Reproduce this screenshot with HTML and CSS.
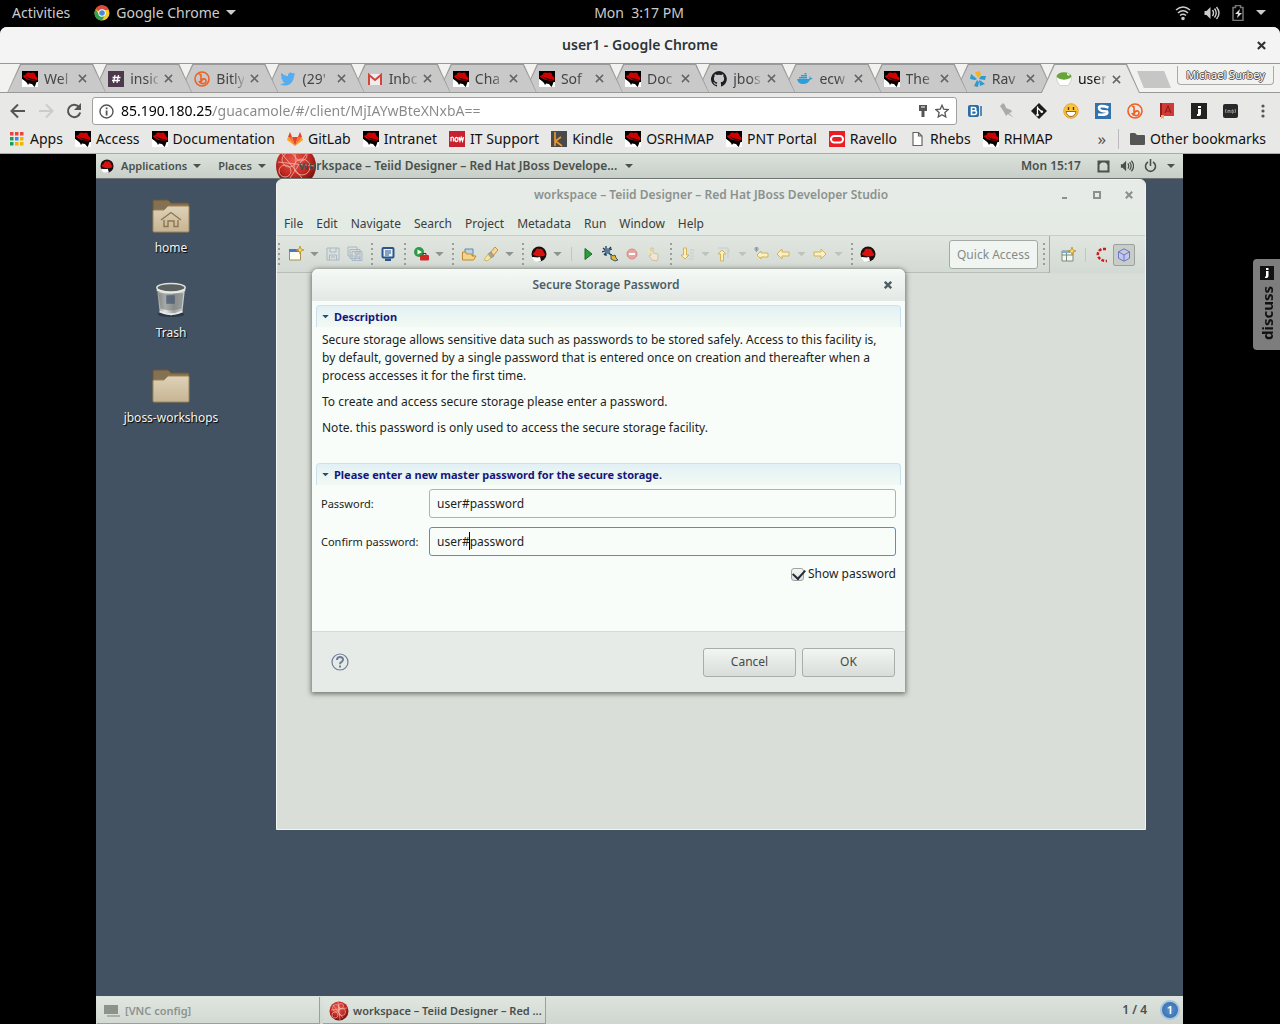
FILE: index.html
```html
<!DOCTYPE html>
<html lang="en">
<head>
<meta charset="utf-8">
<title>user1 - Google Chrome</title>
<link rel="stylesheet" href="styles.css">
</head>
<body>
<svg class="sprite" aria-hidden="true">
  <defs>
    <radialGradient id="ball" cx="45%" cy="35%" r="65%"><stop offset="0" stop-color="#e8584c"/><stop offset=".6" stop-color="#c22a22"/><stop offset="1" stop-color="#6e0f0c"/></radialGradient>
    <linearGradient id="paper" x1="0" y1="0" x2="0" y2="1"><stop offset="0" stop-color="#dfd2b8"/><stop offset="1" stop-color="#c6b593"/></linearGradient>
    <linearGradient id="bin" x1="0" y1="0" x2="1" y2="0"><stop offset="0" stop-color="#8d9290"/><stop offset=".3" stop-color="#e4e7e4"/><stop offset=".6" stop-color="#9ea3a1"/><stop offset="1" stop-color="#d0d4d1"/></linearGradient>
    <symbol id="hat" viewBox="0 0 16 16"><path fill="#000" d="M0 0h16v11l-4 1H5L0 8z"/><path fill="#fff" d="M0 8l5 3.500 7 .5 4-1v5H0z"/><path fill="#d00000" d="M1 5.500Q1 4 3.500 4 4 1 6.500 1.500q2 .8 4.500 0Q13 1.500 13.500 5q2 1 2 2.500 0 2.500-5 2Q5 9.500 1 5.500z"/><path fill="#000" d="M3.800 5q3.700 3.500 9.500 3v1Q6 9.500 3.800 5zM3 9.500l2 2.500 1 2 1-1.500 3 .5 2.500 3 1-2 1-3.500-6 .5z"/></symbol>
    <symbol id="rhround" viewBox="0 0 16 16"><circle cx="8" cy="8" r="7.500" fill="#1a1010"/><path fill="#d9120f" d="M2 8c0-1 1-2 2-2 1-4 3-4 4-3 2-1 4 0 5 4 2 1 1 3-1 3-4 1-9 0-10-2z"/><path fill="#fff" d="M1 11c3 0 5 1 8 0l1 4c-4 2-8 0-9-4z"/></symbol>
    <symbol id="x" viewBox="0 0 10 10"><path d="M1 1l8 8M9 1L1 9" fill="none" stroke="currentColor" stroke-width="1.700"/></symbol>
    <symbol id="car" viewBox="0 0 10 6"><path d="M0 0h10L5 5z" fill="currentColor"/></symbol>
    <symbol id="bitly" viewBox="0 0 16 16"><circle cx="8" cy="8" r="7" fill="none" stroke="#ee6123" stroke-width="1.600"/><path fill="none" stroke="#ee6123" stroke-width="1.600" d="M5 3l2 1v7c1-4 5-4 5-1 0 4-6 3-7 0"/></symbol>
    <symbol id="speaker" viewBox="0 0 16 16"><path fill="currentColor" d="M1 6h2l4-4v12L3 10H1z"/><path d="M9 5q2 3 0 6M11 3.500q3.500 4.500 0 9M13 2q5 6 0 12" fill="none" stroke="currentColor" stroke-width="1.400"/></symbol>
    <symbol id="folder" viewBox="0 0 38 34"><path fill="#847152" stroke="#6b5636" d="M1 15V2q0-1 1-1h14l3 3h17q1 0 1 1v10z"/><path fill="url(#paper)" stroke="#a08455" d="M1 12q0-1 1-1h10l4-4h20q1 0 1 1v24q0 1-1 1H2q-1 0-1-1z"/></symbol>
    <symbol id="redball" viewBox="0 0 20 20"><circle cx="10" cy="10" r="9.500" fill="url(#ball)"/><g fill="none" stroke="#f6c0b6" stroke-width=".6"><circle cx="7" cy="7" r="3.500"/><circle cx="13" cy="11" r="3.500"/><circle cx="12" cy="5" r="2.500"/><circle cx="6" cy="14" r="3"/><path d="M2 9l16-2M4 4l10 13M9 1l2 18"/></g></symbol>
    <symbol id="arrowl" viewBox="0 0 16 16"><path d="M2 8l5-5v3h7v4H7v3z" fill="#faf0c4" stroke="#d5b258"/></symbol>
  </defs>
</svg>

<header class="shell">
  <div class="shell-side">
    <a href="#">Activities</a>
    <a href="#" class="app-menu">
      <svg width="16" height="16" viewBox="0 0 16 16"><circle cx="8" cy="8" r="7.500" fill="#f6c927"/><path fill="#dd4b3e" d="M8 8L1.500 4.200A7.500 7.500 0 0 1 15 5H8z"/><path fill="#2da44e" d="M1.500 4.200A7.500 7.500 0 0 0 8 15.500L11 10 5 9.500z"/><circle cx="8" cy="8" r="3.700" fill="#fff"/><circle cx="8" cy="8" r="2.800" fill="#4a86e0"/></svg>
      Google Chrome
      <svg width="10" height="6"><use href="#car"/></svg>
    </a>
  </div>
  <time>Mon&nbsp; 3:17 PM</time>
  <div class="shell-side tray">
    <svg width="16" height="16" viewBox="0 0 16 16" fill="none" stroke="#ccc" stroke-width="1.600"><path d="M1 5q7-6 14 0M3 8q5-4.500 10 0M5 10.500q3-2.500 6 0"/><circle cx="8" cy="13.500" r="1" fill="#ccc"/></svg>
    <svg width="17" height="16"><use href="#speaker"/></svg>
    <svg width="12" height="16" viewBox="0 0 12 16"><path d="M1 2.500h2.500v-2h5v2H11v13H1z" fill="none" stroke="#777" stroke-width="1.500"/><path d="M8 4L3 9h3l-1 4 5-5H7z" fill="#ddd"/></svg>
    <svg width="10" height="6"><use href="#car"/></svg>
  </div>
</header>

<div class="browser">
  <div class="titlebar"><h1>user1 - Google Chrome</h1><button class="plain" aria-label="Close window"><svg width="9" height="9" viewBox="0 0 10 10"><path d="M1 1l8 8M9 1L1 9" stroke="currentColor" stroke-width="2.400"/></svg></button></div>

  <div class="strip">
    <nav class="tabs" aria-label="Tabs">
      <div class="tab"><div class="tab-in"><svg class="fav"><use href="#hat"/></svg><span>Wel</span><button class="plain" aria-label="Close tab"><svg width="9" height="9"><use href="#x"/></svg></button></div></div>
      <div class="tab"><div class="tab-in"><svg class="fav" viewBox="0 0 16 16"><path fill="#4d394b" d="M0 0h16v16H0z"/><path d="M7 4L5.500 12M10.500 4L9 12M4.500 6.500h8M4 9.500h8" stroke="#fff" stroke-width="1.300"/></svg><span>insic</span><button class="plain" aria-label="Close tab"><svg width="9" height="9"><use href="#x"/></svg></button></div></div>
      <div class="tab"><div class="tab-in"><svg class="fav"><use href="#bitly"/></svg><span>Bitly</span><button class="plain" aria-label="Close tab"><svg width="9" height="9"><use href="#x"/></svg></button></div></div>
      <div class="tab"><div class="tab-in"><svg class="fav" viewBox="0 0 16 16"><path fill="#55acee" d="M0 13q3 0 5-1.500-2-.2-3-2h1.400Q1 8.500 1 6l1.300.4Q0 4 1.500 2 4 5 8 5.300 7.500 2 10.500 1.500q1.500 0 2.500 1l2-.8-1.300 1.900 1.800-.5L14 4.800Q14 10 10 13q-5 3-10 0z"/></svg><span>(29'</span><button class="plain" aria-label="Close tab"><svg width="9" height="9"><use href="#x"/></svg></button></div></div>
      <div class="tab"><div class="tab-in"><svg class="fav" viewBox="0 0 16 16"><path fill="#eee" d="M1 3h14v11H1z"/><path fill="none" stroke="#d5433a" stroke-width="2" d="M2 14V4l6 5 6-5v10"/></svg><span>Inbc</span><button class="plain" aria-label="Close tab"><svg width="9" height="9"><use href="#x"/></svg></button></div></div>
      <div class="tab"><div class="tab-in"><svg class="fav"><use href="#hat"/></svg><span>Cha</span><button class="plain" aria-label="Close tab"><svg width="9" height="9"><use href="#x"/></svg></button></div></div>
      <div class="tab"><div class="tab-in"><svg class="fav"><use href="#hat"/></svg><span>Sof</span><button class="plain" aria-label="Close tab"><svg width="9" height="9"><use href="#x"/></svg></button></div></div>
      <div class="tab"><div class="tab-in"><svg class="fav"><use href="#hat"/></svg><span>Doc</span><button class="plain" aria-label="Close tab"><svg width="9" height="9"><use href="#x"/></svg></button></div></div>
      <div class="tab"><div class="tab-in"><svg class="fav" viewBox="0 0 16 16"><path fill="#1b1f23" d="M8 0a8 8 0 0 0-2.500 15.600c.4.100.5-.2.500-.4v-1.500c-2.200.5-2.700-1-2.700-1-.4-.9-.9-1.200-.9-1.200-.7-.5.100-.5.100-.5.800.1 1.200.8 1.200.8.700 1.300 1.900.9 2.300.7.100-.5.300-.9.500-1.100C4.700 11.200 2.900 10.500 2.900 7.500c0-.9.300-1.600.8-2.200-.1-.2-.4-1 .1-2.100 0 0 .7-.2 2.200.8a7.600 7.600 0 0 1 4 0c1.500-1 2.200-.8 2.200-.8.400 1.100.2 1.900.1 2.100.5.600.8 1.300.8 2.200 0 3-1.800 3.700-3.600 3.900.3.200.5.700.5 1.500v2.200c0 .2.100.5.600.4A8 8 0 0 0 8 0z"/></svg><span>jbos</span><button class="plain" aria-label="Close tab"><svg width="9" height="9"><use href="#x"/></svg></button></div></div>
      <div class="tab"><div class="tab-in"><svg class="fav" viewBox="0 0 16 16"><path fill="#2b9fd8" d="M0 8h12q1-1 .500-3 1 .5 1.300 2 1-.3 2 .2-1 1.300-2.600 1.300Q11 13 6 13 1 13 0 8zM2 6h8v1.500H2zM4 4h6v1.500H4zM7.500 2h2v1.500h-2z"/></svg><span>ecw</span><button class="plain" aria-label="Close tab"><svg width="9" height="9"><use href="#x"/></svg></button></div></div>
      <div class="tab"><div class="tab-in"><svg class="fav"><use href="#hat"/></svg><span>The</span><button class="plain" aria-label="Close tab"><svg width="9" height="9"><use href="#x"/></svg></button></div></div>
      <div class="tab"><div class="tab-in"><svg class="fav" viewBox="0 0 16 16"><path fill="#2a9bd0" d="M7 8L1 3l-1 5 5 1zM7 9l-3 6 4 1 1-5zM9 9l1 6 5-2-4-3zM9 8l6 1 1-4-5 0z"/><path fill="#f5b324" d="M8 7L5 1l5-1 1 4z"/></svg><span>Rav</span><button class="plain" aria-label="Close tab"><svg width="9" height="9"><use href="#x"/></svg></button></div></div>
      <div class="tab active"><div class="tab-in"><svg class="fav" viewBox="0 0 16 16"><path fill="#fff" stroke="#bbb" stroke-width=".6" d="M.5 5h15q0 7-4 9.500h-7Q.5 12 .5 5z"/><ellipse cx="8" cy="5" rx="7.300" ry="3.700" fill="#67a53c"/><path fill="#e7eed0" d="M11 2l3 1-1 2-2-1z"/></svg><span>user</span><button class="plain" aria-label="Close tab"><svg width="9" height="9"><use href="#x"/></svg></button></div></div>
    </nav>
    <button class="newtab" aria-label="New tab"></button>
    <button class="profile">Michael Surbey</button>
  </div>

  <div class="toolbar">
    <button class="plain" aria-label="Back"><svg width="16" height="16" viewBox="0 0 16 16" fill="none" stroke="#555" stroke-width="2"><path d="M15 8H2M8 1.500L1.500 8 8 14.500"/></svg></button>
    <button class="plain" aria-label="Forward"><svg width="16" height="16" viewBox="0 0 16 16" fill="none" stroke="#ccc" stroke-width="2"><path d="M1 8h13M8 1.500L14.500 8 8 14.500"/></svg></button>
    <button class="plain" aria-label="Reload"><svg width="16" height="16" viewBox="0 0 16 16"><path d="M13 4a6.200 6.200 0 1 0 1.200 5.500" fill="none" stroke="#555" stroke-width="2"/><path fill="#555" d="M15 0v7H8z"/></svg></button>
    <div class="omnibox">
      <svg width="15" height="15" viewBox="0 0 15 15"><circle cx="7.500" cy="7.500" r="6.500" fill="none" stroke="#555" stroke-width="1.400"/><path fill="#555" d="M6.700 3.500h1.800v1.700H6.700zM6.700 6.500h1.800v5H6.700z"/></svg>
      <input class="url" type="text" aria-label="Address" value="85.190.180.25/guacamole/#/client/MjIAYwBteXNxbA==">
      <svg width="10" height="14" viewBox="0 0 10 14"><path fill="#555" d="M1 1h8v6H6.500v6h-3V7H1z"/><path fill="#fff" d="M3 2.500h4v1H3z"/></svg>
      <svg width="14" height="14" viewBox="0 0 16 16"><path d="M8 1.500l2 4.500 5 .5-3.700 3.300 1 5L8 12.200l-4.300 2.600 1-5L1 6.500 6 6z" fill="none" stroke="#555" stroke-width="1.500"/></svg>
    </div>
    <div class="ext">
      <svg viewBox="0 0 16 16"><rect x="1" y="2" width="11" height="12" rx="2" fill="#2a6ca5"/><path fill="none" stroke="#fff" stroke-width="1.600" d="M4.500 4.500v7h3q2 0 2-2t-2-1.700h-3 2.600q1.700 0 1.700-1.700T7 4.500z"/><path stroke="#2a6ca5" stroke-width="1.500" d="M14 3v10"/></svg>
      <svg viewBox="0 0 16 16"><path fill="#aaa" d="M1 3l3-3 2 2 1 3 5 2 1 2-3 1 5 5-6-4-2 2-2-4-2-3z"/></svg>
      <svg viewBox="0 0 16 16"><path fill="#1c1c1c" d="M8 0l8 8-8 8-8-8z"/><path stroke="#fff" stroke-width="1.300" d="M6.500 3.500v9M6.500 5L11 9"/><circle cx="6.500" cy="12" r="1.300" fill="#fff"/><circle cx="10.800" cy="8.700" r="1.300" fill="#fff"/></svg>
      <svg viewBox="0 0 16 16"><circle cx="8" cy="8" r="7.300" fill="#fbc53a" stroke="#e9962b" stroke-width=".8"/><path fill="#fff" stroke="#7c4a10" stroke-width=".8" d="M3 8.500h10q-1 5-5 5t-5-5z"/><path stroke="#5d3508" stroke-width="1.400" d="M5.500 4v3M10.500 4v3"/></svg>
      <svg viewBox="0 0 16 16"><path fill="#3273ad" d="M0 0h16v16H0z"/><path fill="none" stroke="#fff" stroke-width="2.600" d="M13.500 4.500Q4 1.500 4 5t8 3.500q2 4-9 3"/></svg>
      <svg><use href="#bitly"/></svg>
      <svg viewBox="0 0 16 16"><path fill="#d33a35" d="M1 0h14v13H1z"/><path fill="#8e1e1c" d="M1 0h2v14H1z"/><path fill="#eee" d="M2 13h13v2H2z"/><path fill="#f3b93a" d="M2 12h3v4l-1.500-1L2 16z"/><path fill="none" stroke="#8e1e1c" stroke-width="1.200" d="M6 10l3-7 3 7M7 8h4"/></svg>
      <svg viewBox="0 0 16 16"><path fill="#222" d="M0 0h16v16H0z"/><path fill="#fff" d="M7 3h3v2H7zM7 6h3v5q0 2-2 2H6v-2h1z"/></svg>
      <svg viewBox="0 0 16 16"><rect y="1" width="15" height="14" rx="2" fill="#26282a"/><path fill="none" stroke="#999" d="M3 6q-1 2 0 4M5 10V7l1 1 1-1v3M9 7v3h1q1-1.500 0-3zM12 6q1 2 0 4"/></svg>
    </div>
    <button class="plain" aria-label="Menu"><svg width="4" height="14" viewBox="0 0 4 14" fill="#555"><circle cx="2" cy="2" r="1.600"/><circle cx="2" cy="7" r="1.600"/><circle cx="2" cy="12" r="1.600"/></svg></button>
  </div>

  <nav class="bookmarks" aria-label="Bookmarks">
    <a href="#" class="apps"><svg class="fav" viewBox="0 0 16 16"><g fill="#e8453c"><path d="M1 1h3.500v3.500H1zM6 1h3.500v3.500H6zM11 1h3.500v3.500H11z"/></g><path fill="#1b9e5a" d="M1 6h3.500v3.500H1zM1 11h3.500v3.500H1z"/><path fill="#3b86f0" d="M6 6h3.500v3.500H6z"/><path fill="#f4b400" d="M11 6h3.500v3.500H11zM6 11h3.500v3.500H6zM11 11h3.500v3.500H11z"/></svg>Apps</a>
    <a href="#"><svg class="fav"><use href="#hat"/></svg>Access</a>
    <a href="#"><svg class="fav"><use href="#hat"/></svg>Documentation</a>
    <a href="#"><svg class="fav" viewBox="0 0 16 16"><path fill="#e24329" d="M8 15L5 6h6z"/><path fill="#fc6d26" d="M8 15L1 6h4zM8 15l7-9h-4z"/><path fill="#fca326" d="M1 6L0 9l8 6zM15 6l1 3-8 6z"/><path fill="#e24329" d="M1 6l2-5 2 5zM15 6l-2-5-2 5z"/></svg>GitLab</a>
    <a href="#"><svg class="fav"><use href="#hat"/></svg>Intranet</a>
    <a href="#"><svg class="fav" viewBox="0 0 16 16"><path fill="#c8202c" d="M0 0h16v16H0z"/><path fill="none" stroke="#fff" stroke-width="1.300" d="M2 10.500V6.500q2.500-1 2.500 1v3M6 8.500q0-2 1.500-2T9 8.500t-1.500 2T6 8.500zM10 6l1 4 1.200-3.500L13.500 10l1-4"/></svg>IT Support</a>
    <a href="#"><svg class="fav" viewBox="0 0 16 16"><path fill="#4a4a4a" d="M0 0h16v16H0z"/><path fill="none" stroke="#f0982d" stroke-width="1.600" d="M4 1v14M10 6l-5.500 4L11 15"/></svg>Kindle</a>
    <a href="#"><svg class="fav"><use href="#hat"/></svg>OSRHMAP</a>
    <a href="#"><svg class="fav"><use href="#hat"/></svg>PNT Portal</a>
    <a href="#"><svg class="fav" viewBox="0 0 16 16"><path fill="#ec1c24" d="M0 0h16v16H0z"/><rect x="2" y="5" width="12" height="6.500" rx="3.200" fill="none" stroke="#fff" stroke-width="2"/></svg>Ravello</a>
    <a href="#"><svg class="fav" viewBox="0 0 16 16"><path fill="#fff" stroke="#666" stroke-width="1.200" d="M4 1.500h5.500L13 5v9.500H4zM9.500 1.500V5H13"/></svg>Rhebs</a>
    <a href="#"><svg class="fav"><use href="#hat"/></svg>RHMAP</a>
    <button class="plain more" aria-label="More bookmarks">»</button>
    <a href="#" class="other"><svg width="15" height="12" viewBox="0 0 15 12"><path fill="#555" d="M0 1q0-1 1-1h4l2 2h7q1 0 1 1v8q0 1-1 1H1q-1 0-1-1z"/></svg>Other bookmarks</a>
  </nav>
</div>

<main class="remote">
  <div class="desktop">
    <div class="panel">
      <button class="plain panel-item"><svg class="menu-logo" width="14" height="14"><use href="#rhround"/></svg>Applications<svg width="8" height="5"><use href="#car"/></svg></button>
      <button class="plain panel-item">Places<svg width="8" height="5"><use href="#car"/></svg></button>
      <button class="plain panel-item task"><svg class="task-ball" viewBox="0 0 40 24" width="40" height="24"><circle cx="20" cy="12" r="20" fill="url(#ball)"/><g fill="none" stroke="#f3b4aa" stroke-width=".8"><circle cx="13" cy="6" r="7"/><circle cx="26" cy="13" r="8"/><circle cx="9" cy="17" r="6"/><circle cx="25" cy="1" r="6"/><path d="M2 8l36 4M6 0l20 24M30 0L14 24"/></g></svg><span>workspace – Teiid Designer – Red Hat JBoss Develope...</span><svg width="8" height="5"><use href="#car"/></svg></button>
      <div class="panel-tray">
        <time>Mon 15:17</time>
        <svg width="13" height="13" viewBox="0 0 13 13"><path fill="none" stroke="currentColor" stroke-width="2" d="M1.500 1.500h10v10h-10z"/><path fill="currentColor" d="M2 2h3L2 5zM11 2v3L8 2z"/></svg>
        <svg width="14" height="14"><use href="#speaker"/></svg>
        <svg width="13" height="14" viewBox="0 0 13 14"><path d="M4 3a5 5 0 1 0 5 0M6.500 0v7" fill="none" stroke="currentColor" stroke-width="1.600"/></svg>
        <svg width="8" height="5"><use href="#car"/></svg>
      </div>
    </div>

    <div class="surface">
      <div class="shortcuts">
        <a href="#"><svg width="38" height="34" viewBox="0 0 38 34"><use href="#folder"/><path d="M9 21l10-7.500L29 21M12 21v6.500h4V22h6v5.500h4V21" fill="none" stroke="#8e7650" stroke-width="1.400"/></svg>home</a>
        <a href="#"><svg width="36" height="36" viewBox="0 0 38 38"><ellipse cx="19" cy="34" rx="14" ry="3" fill="#2a3746"/><path fill="url(#bin)" d="M4 5h30l-3 27q-12 6-24 0z"/><path fill="#727876" opacity=".55" d="M6 12h26l-2 16q-11 4-22 0z"/><path fill="#4c5d77" opacity=".8" d="M14 14h9v9h-9z"/><ellipse cx="19" cy="6" rx="15" ry="4.500" fill="#5a615f" stroke="#dfe2df" stroke-width="1.500"/><path fill="none" stroke="#e6e9e6" stroke-width="2" d="M4 8q15 7 30 0M7 31q12 6 24 0"/></svg>Trash</a>
        <a href="#"><svg width="38" height="34"><use href="#folder"/></svg>jboss-workshops</a>
      </div>

      <section class="studio" aria-label="Developer Studio">
        <div class="studio-title">
          <h2>workspace – Teiid Designer – Red Hat JBoss Developer Studio</h2>
          <button class="plain" aria-label="Minimize"><svg width="8" height="8" viewBox="0 0 8 8"><path fill="currentColor" d="M1 6h5v2H1z"/></svg></button>
          <button class="plain" aria-label="Maximize"><svg width="8" height="8" viewBox="0 0 8 8"><path fill="none" stroke="currentColor" stroke-width="2" d="M1 1h6v6H1z"/></svg></button>
          <button class="plain" aria-label="Close"><svg width="8" height="8" viewBox="0 0 10 10"><path d="M1 1l8 8M9 1L1 9" stroke="currentColor" stroke-width="2.600"/></svg></button>
        </div>
        <div class="menubar">
          <button class="plain">File</button><button class="plain">Edit</button><button class="plain">Navigate</button><button class="plain">Search</button><button class="plain">Project</button><button class="plain">Metadata</button><button class="plain">Run</button><button class="plain">Window</button><button class="plain">Help</button>
        </div>
        <div class="tools">
          <div class="tool-row">
            <i class="grip"></i>
            <svg class="tool" viewBox="0 0 16 16"><path fill="#fdfdf4" stroke="#a98f4a" d="M1.500 4h11v10h-11z"/><path fill="#3f7cc4" d="M1 3h10v3H1z"/><path fill="#f7dc6a" stroke="#b48a1e" stroke-width=".7" d="M12 0l1 3 3 1-3 1-1 3-1-3-3-1 3-1z"/></svg>
            <svg class="drop"><use href="#car"/></svg>
            <svg class="tool" viewBox="0 0 16 16" fill="none" stroke="#a9b7c6"><path d="M2 2h12v12H2zM5 2v4h6V2M4.500 14V9h7v5M6 11h4"/></svg>
            <svg class="tool" viewBox="0 0 16 16" fill="none" stroke="#a9b7c6"><path d="M1 1h9v9H1zM3 3.500h10v9H3zM5 5.500h10v9H5zM8 14.500V11h5v3.500M8 5.500V8h4V5.500"/></svg>
            <i class="grip"></i>
            <svg class="tool" viewBox="0 0 16 16"><rect x="2.500" y="2" width="11" height="9.500" rx="1" fill="#e7f0f5" stroke="#2b5590" stroke-width="2"/><path stroke="#2b5590" d="M5 5h6M5 7h6M5 9h4"/><path fill="#2b5590" d="M5 12.500h6V15H5z"/></svg>
            <i class="grip"></i>
            <svg class="tool" viewBox="0 0 16 16"><circle cx="6" cy="6" r="5" fill="#2f9b45"/><path fill="#fff" d="M4.500 3.500L9 6 4.500 8.500z"/><rect x="7" y="9" width="9" height="5.500" rx="1" fill="#cf2a27"/><path fill="none" stroke="#7d1514" d="M10 9V7.500h3V9"/></svg>
            <svg class="drop"><use href="#car"/></svg>
            <i class="grip"></i>
            <svg class="tool" viewBox="0 0 16 16"><path fill="#bcd3e6" stroke="#6486a8" d="M4 3h8v7H4z"/><path fill="#f4d58a" stroke="#c08a2c" d="M1.500 14V6h3l1 2H11v2h4l-2.500 4z"/></svg>
            <svg class="tool" viewBox="0 0 16 16"><path fill="#f4d79c" stroke="#c6923c" d="M7 7l5-6 3 3-5 6z"/><path fill="#a9a6a0" stroke="#777" stroke-width=".6" d="M5 8l3-2 3 4-3 2z"/><path fill="#f4e7a5" stroke="#c6a63c" stroke-width=".7" d="M1 14l4-6 3 4-4 3z"/></svg>
            <svg class="drop"><use href="#car"/></svg>
            <i class="grip"></i>
            <svg class="tool"><use href="#rhround"/></svg>
            <svg class="drop"><use href="#car"/></svg>
            <i class="sep"></i>
            <svg class="tool" viewBox="0 0 16 16"><path fill="#2c9d38" stroke="#1a6a25" d="M5 2.500L12 8l-7 5.500z"/></svg>
            <svg class="tool" viewBox="0 0 16 16"><path stroke="#24384c" stroke-width="1.300" d="M1 2l8 7M4 0v10M9 1L2 9M0 6l10-3"/><circle cx="5.500" cy="5" r="2.800" fill="#4c7ba4"/><path fill="#e2b93a" stroke="#24384c" stroke-width=".8" d="M9 8l2 2 2-1 1 3 2 2-3 1-2-1-2-1z"/></svg>
            <svg class="tool" viewBox="0 0 16 16"><circle cx="8" cy="8" r="5" fill="#e5a5a0" stroke="#d88"/><path fill="#fff" d="M5 7h6v2H5z"/></svg>
            <svg class="tool" viewBox="0 0 16 16"><path fill="#eee6d2" stroke="#cfbf9c" d="M6 14l-3-4 2-1V2h2v5l5 1v4l-1 3z"/><path fill="#f7e4a0" d="M1 3l8 5-8-2z"/></svg>
            <i class="grip"></i>
            <svg class="tool" viewBox="0 0 16 16"><path stroke="#c2ccd2" d="M11 4h4M11 7h4M11 10h4M10 13h5"/><path d="M6 13l-4-4h2.500V2h3v7H10z" fill="#faf0c4" stroke="#d5b258"/></svg>
            <svg class="drop pale"><use href="#car"/></svg>
            <svg class="tool" viewBox="0 0 16 16"><path stroke="#c2ccd2" d="M2 2h10M11 5h3M12 2v10"/><path d="M6 4l4 4H7.500v7h-3V8H2z" fill="#faf0c4" stroke="#d5b258"/></svg>
            <svg class="drop pale"><use href="#car"/></svg>
            <svg class="tool" viewBox="0 0 16 16"><path d="M4 9l4-4v2h7v4H8v2z" fill="#faf0c4" stroke="#d5b258"/><path stroke="#7a8a98" d="M1 3h5M3.500 1v5M2 1l3 4M5 1L2 5" stroke-width=".7"/></svg>
            <svg class="tool"><use href="#arrowl"/></svg>
            <svg class="drop pale"><use href="#car"/></svg>
            <svg class="tool flip"><use href="#arrowl"/></svg>
            <svg class="drop pale"><use href="#car"/></svg>
            <i class="grip"></i>
            <svg class="tool"><use href="#rhround"/></svg>
            <input class="quick" type="text" placeholder="Quick Access" aria-label="Quick Access">
            <i class="grip"></i>
          </div>
          <div class="perspectives">
            <svg class="tool" viewBox="0 0 16 16"><path fill="#f4f7ee" stroke="#7d8b80" d="M2 4h11v10H2zM2 8h11M6.500 4v10"/><path fill="#7eb0cc" d="M2 4h8v2H2z"/><path fill="#f7dc6a" stroke="#b48a1e" stroke-width=".7" d="M12 0l1 3 3 1-3 1-1 3-1-3-3-1 3-1z"/></svg>
            <i class="sep"></i>
            <svg class="tool" viewBox="0 0 16 16"><path fill="none" stroke="#c81e1e" stroke-width="2.500" stroke-dasharray="3 1.500" d="M12 2H8Q3 4 4 9q2 5 9 5"/></svg>
            <button class="pressed" aria-label="Teiid Designer"><svg width="14" height="14" viewBox="0 0 14 14"><path fill="#c3c8ee" stroke="#6d76c4" d="M7 .8l5.500 3v6.500L7 13.200 1.500 10.300V3.800zM1.500 3.800L7 7l5.500-3.200M7 7v6"/></svg></button>
          </div>
        </div>
      </section>

      <section class="dialog" role="dialog" aria-labelledby="dlg">
        <div class="dialog-title"><h2 id="dlg">Secure Storage Password</h2><button class="plain" aria-label="Close dialog"><svg width="8" height="8" viewBox="0 0 10 10"><path d="M1 1l8 8M9 1L1 9" stroke="currentColor" stroke-width="3"/></svg></button></div>
        <form class="dialog-body">
          <h3><button type="button" class="plain expander"><svg width="7" height="4" viewBox="0 0 10 6"><use href="#car"/></svg>Description</button></h3>
          <div class="prose">
            <p>Secure storage allows sensitive data such as passwords to be stored safely. Access to this facility is,<br>by default, governed by a single password that is entered once on creation and thereafter when a<br>process accesses it for the first time.</p>
            <p>To create and access secure storage please enter a password.</p>
            <p>Note. this password is only used to access the secure storage facility.</p>
          </div>
          <h3><button type="button" class="plain expander"><svg width="7" height="4" viewBox="0 0 10 6"><use href="#car"/></svg>Please enter a new master password for the secure storage.</button></h3>
          <div class="fields">
            <label for="pw">Password:</label><div class="field"><input id="pw" type="text" value="user#password"></div>
            <label for="pw2">Confirm password:</label><div class="field current"><input id="pw2" type="text" value="user#password"><i class="cursor"></i></div>
          </div>
          <label class="show"><input type="checkbox" checked>Show password</label>
        </form>
        <div class="dialog-foot">
          <button class="plain help" aria-label="Help"><svg width="18" height="18" viewBox="0 0 18 18" fill="none" stroke="#6d7d96"><circle cx="9" cy="9" r="8" stroke-width="1.200"/><path stroke-width="2" d="M6 7q0-3 3-3t3 2.500Q12 8 10.500 9 9 9.500 9 11.300"/><path fill="#6d7d96" stroke="none" d="M8 12.500h2v2H8z"/></svg></button>
          <button class="push">Cancel</button>
          <button class="push">OK</button>
        </div>
      </section>
    </div>

    <div class="panel bottom">
      <button class="window-btn idle"><svg width="18" height="14" viewBox="0 0 18 14"><path fill="#8d928d" d="M1 1h14v9H1z"/><path fill="#aab0aa" d="M4 11h13v2H4z"/></svg>[VNC config]</button>
      <button class="window-btn"><svg width="20" height="20"><use href="#redball"/></svg>workspace – Teiid Designer – Red ...</button>
      <span class="pager">1 / 4</span>
      <button class="notify">1</button>
    </div>
  </div>
  <button class="discuss"><svg width="14" height="14" viewBox="0 0 14 14"><path fill="#111" d="M0 0h14v14H0z"/><path fill="#fff" d="M6 2h2.500v2H6zM6 5h2.500v5q0 2-2 2H5v-1.500h1z"/></svg><span>discuss</span></button>
</main>
</body>
</html>
```
FILE: styles.css
```css
* { box-sizing: border-box; }
body { margin: 0; min-height: 100vh; display: flex; flex-direction: column; background: #000; font: 14px/20px "Noto Sans", "Open Sans", sans-serif; color: #222; }
h1, h2, h3, p { margin: 0; font-size: inherit; }
a { color: inherit; text-decoration: none; }
svg { flex: none; display: block; }
button, input { font: inherit; color: inherit; }
.sprite { position: absolute; width: 0; height: 0; }
.plain { background: none; border: 0; padding: 0; }
.fav { width: 16px; height: 16px; }

.shell { display: flex; align-items: center; height: 27px; padding: 0 14px 2px 12px; color: #ccc; }
.shell-side { flex: 1; display: flex; gap: 24px; align-items: center; }
.app-menu { display: flex; gap: 6px; align-items: center; }
.shell-side.tray { justify-content: flex-end; gap: 12px; }

.browser { background: #e8e8e7; border-radius: 7px 7px 0 0; border-bottom: 1px solid #aaa; }
.titlebar { display: flex; align-items: center; height: 36px; padding: 0 14px 0 23px; background: #f4f4f4; border-radius: 7px 7px 0 0; color: #2e3436; }
.titlebar h1 { flex: 1; text-align: center; font-weight: 600; }
.strip { display: flex; height: 30px; border-top: 1px solid #999; padding-left: 7px; background: linear-gradient(#999, #999) bottom / 100% 1px no-repeat #f2f2f0; }
.tabs { flex: 1; min-width: 0; display: flex; padding-left: 13px; }
.tab { flex: 1 1 0; min-width: 0; margin-left: -13px; padding: 1px 0; background: #999; clip-path: polygon(13px 0, calc(100% - 13px) 0, 100% 100%, 0 100%); }
.tab-in { height: 100%; margin: 0 1px; padding: 0 18px 0 14px; display: flex; align-items: center; gap: 6px; background: #c9c9c9; clip-path: polygon(13px 0, calc(100% - 13px) 0, 100% 100%, 0 100%); color: #444; }
.tab span { flex: 1; min-width: 0; white-space: nowrap; mask-image: linear-gradient(90deg, #000 60%, #0003); }
.tab button { color: #666; }
.tab:nth-child(1) { z-index: 12; }
.tab:nth-child(2) { z-index: 11; }
.tab:nth-child(3) { z-index: 10; }
.tab:nth-child(4) { z-index: 9; }
.tab:nth-child(5) { z-index: 8; }
.tab:nth-child(6) { z-index: 7; }
.tab:nth-child(7) { z-index: 6; }
.tab:nth-child(8) { z-index: 5; }
.tab:nth-child(9) { z-index: 4; }
.tab:nth-child(10) { z-index: 3; }
.tab:nth-child(11) { z-index: 2; }
.tab:nth-child(12) { z-index: 1; }
.tab.active { z-index: 20; padding-bottom: 0; }
.active .tab-in { background: #e8e8e7; color: #111; }
.newtab { flex: none; width: 34px; height: 17px; margin: 7px 6px 0 -3px; padding: 0; border: 0; background: #c6c6c6; clip-path: polygon(0 0, 80% 0, 100% 100%, 20% 100%); }
.profile { flex: none; width: 97px; height: 19px; margin: 2px 6px 0 0; padding: 0; border: 1px solid #aaa; border-top: 0; border-radius: 0 0 4px 4px; background: #f2f2f0; color: #fff; font-size: 11px; line-height: 16px; text-shadow: 1px 0 #555, -1px 0 #555, 0 1px #555, 0 -1px #555; white-space: nowrap; }

.toolbar { display: flex; align-items: center; gap: 12px; height: 36px; padding: 0 15px 0 10px; }
.omnibox { flex: 1; display: flex; align-items: center; gap: 7px; height: 28px; margin-left: -2px; padding: 0 7px 0 6px; border: 1px solid #a0a0a0; border-radius: 3px; background: #fff; }
.url { flex: 1; min-width: 0; border: 0; outline: 0; padding: 0; color: transparent; background: linear-gradient(90deg, #000 92px, #888 92px); background-clip: text; -webkit-background-clip: text; }
.ext { display: flex; gap: 16px; margin: 0 10px 0 -2px; }
.ext svg { width: 16px; height: 16px; }

.bookmarks { display: flex; align-items: center; gap: 12px; height: 24px; padding: 0 14px 4px 9px; color: #111; white-space: nowrap; }
.bookmarks a { display: flex; align-items: center; gap: 5px; }
.bookmarks .more { margin-left: auto; font-size: 17px; color: #555; }
.bookmarks .other { border-left: 1px solid #bbb; padding-left: 11px; }

.remote { flex: 1; display: flex; position: relative; padding: 0 97px 0 96px; font-size: 12px; line-height: 18px; }
.desktop { flex: 1; min-width: 0; display: flex; flex-direction: column; background: #425262; }
.panel { display: flex; align-items: center; height: 25px; padding: 0 8px 0 4px; border-bottom: 1px solid #6d746f; background: linear-gradient(#dbe2db, #c8cec8); font-size: 11px; font-weight: 600; color: #4a504c; white-space: nowrap; }
.panel-item { display: flex; align-items: center; gap: 6px; margin-right: 17px; }
.menu-logo { margin-right: 1px; }
.task { margin-left: -7px; gap: 8px; font-size: 12px; }
.task-ball { margin-right: -25px; }
.task span { z-index: 1; }
.panel-tray { margin-left: auto; display: flex; align-items: center; gap: 10px; font-size: 12px; }
.panel-tray time { margin-right: 6px; }

.surface { flex: 1; position: relative; }
.shortcuts { width: 150px; padding-top: 16px; display: flex; flex-direction: column; gap: 23px; }
.shortcuts a { display: flex; flex-direction: column; align-items: center; justify-content: flex-end; gap: 6px; height: 62px; color: #f2f4f2; text-shadow: 1px 1px 1px #000; }

.studio { position: absolute; left: 180px; right: 37px; top: 0; height: 651px; border: 1px solid #f1f5f1; border-radius: 6px 6px 0 0; background: #d9dfd8; }
.studio-title { display: flex; align-items: center; gap: 24px; height: 30px; padding: 0 12px 0 108px; border-radius: 6px 6px 0 0; background: #e6ebe7; color: #8b928e; }
.studio-title h2 { flex: 1; font-weight: 600; text-align: center; }
.menubar { display: flex; align-items: center; gap: 13px; height: 26px; padding: 2px 0 0 7px; background: #e4eae4; border-bottom: 1px solid #c5d1c5; color: #3a403c; }
.tools { display: flex; height: 37px; background: linear-gradient(#e1e6e0, #d3dad3); }
.tool-row { flex: 1; display: flex; align-items: center; border-bottom: 1px solid #b7bdb7; }
.tool { width: 16px; height: 16px; margin: 0 3px; }
.flip { transform: rotate(180deg); }
.drop { width: 9px; height: 5px; margin: 0 3px; color: #8c948e; }
.pale { color: #bcc4bd; }
.grip { width: 11px; height: 22px; background: repeating-linear-gradient(#9a9f9a 0 2px, transparent 2px 5px) center / 2px 100% no-repeat; }
.grip:first-child { width: 8px; background-position: 1px 0; }
.sep { width: 12px; height: 14px; background: linear-gradient(#c0c6c0, #c0c6c0) center / 1px 100% no-repeat; }
.quick { width: 89px; height: 29px; margin-left: auto; padding: 0 7px; border: 1px solid #a4aaa4; border-radius: 3px; background: #f1f5f1; }
.quick::placeholder { color: #858b87; opacity: 1; }
.perspectives { display: flex; align-items: center; padding: 0 10px 0 7px; border-left: 1px solid #a4aaa4; }
.pressed { display: grid; place-items: center; width: 22px; height: 22px; padding: 0; border: 1px solid #9ba19c; border-radius: 2px; background: #c8cdc8; }

.dialog { position: absolute; left: 216px; top: 90px; width: 593px; border-radius: 6px 6px 0 0; background: #f8fdf9; box-shadow: 0 1px 5px 1px #555c; color: #1c1f1d; }
.dialog-title { display: flex; align-items: center; height: 32px; padding: 0 13px 0 16px; border-radius: 6px 6px 0 0; background: linear-gradient(#f6faf6, #e4e8e4); color: #4d5f66; }
.dialog-title h2 { flex: 1; font-weight: 600; text-align: center; }
.dialog-body { height: 330px; padding: 4px 4px 0; }
.dialog-body h3 { height: 22px; border: 1px solid #cbe0ee; border-bottom: 0; border-radius: 4px 4px 0 0; background: linear-gradient(#e2f0f5, #f3faf3); font-size: 11px; font-weight: 700; color: #16167c; }
.expander { display: flex; align-items: center; gap: 5px; height: 22px; padding-left: 5px; }
.expander svg { color: #2b4d70; }
.prose { display: flex; flex-direction: column; gap: 8px; height: 136px; padding: 4px 6px 0; white-space: nowrap; }
.fields { display: grid; grid-template-columns: 102px 1fr; gap: 9px 6px; align-items: center; padding: 4px 5px 0 5px; font-size: 12px; white-space: nowrap; }
.fields label { font-size: 11px; }
.field { position: relative; }
.field input { display: block; width: 100%; height: 29px; padding: 0 7px; border: 1px solid #aeb3ae; border-radius: 3px; background: #f9fdfa; outline: 0; }
.field.current input { border-color: #5590cd; }
.cursor { position: absolute; left: 40px; top: 5px; width: 1px; height: 18px; background: #000; }
.show { display: flex; justify-content: flex-end; align-items: center; gap: 4px; margin-top: 9px; padding-right: 5px; }
.show input { appearance: none; width: 13px; height: 13px; margin: 0; border: 1px solid #a0a5a0; border-radius: 3px; background: linear-gradient(#f4f7f4, #dfe3df); display: grid; place-items: center; overflow: visible; }
.show input::before { content: ""; width: 6px; height: 10px; border: solid #222c36; border-width: 0 2px 2px 0; transform: translate(1px, -2px) rotate(42deg); }
.dialog-foot { display: flex; align-items: center; gap: 6px; height: 61px; padding: 0 10px 0 19px; border-top: 1px solid #d5dad5; background: #e7ebe7; }
.help { margin-right: auto; }
.push { width: 93px; height: 29px; padding: 0; border: 1px solid #a9aea9; border-radius: 3px; background: linear-gradient(#f2f5f2, #d9ddd9); color: #444a46; }

.bottom { height: 28px; border: 0; padding: 0 3px 0 1px; background: linear-gradient(#dde4dd, #cfd6cf); }
.window-btn { display: flex; align-items: center; gap: 4px; width: 223px; height: 27px; margin-right: 3px; padding: 2px 6px 0; border: solid #9aa09a; border-width: 0 1px 1px 0; background: linear-gradient(#dfe5df, #d2d8d2); }
.idle { color: #8c938e; }
.pager { margin-left: auto; padding-right: 13px; font-size: 12px; }
.notify { width: 20px; height: 20px; padding: 0; border: 2px solid #aac4de; border-radius: 50%; background: radial-gradient(#5b93cf, #2f68a8); color: #fff; line-height: 14px; }

.discuss { position: absolute; right: 0; top: 105px; width: 27px; height: 91px; display: flex; flex-direction: column; align-items: center; gap: 6px; padding: 7px 0; border: 0; border-radius: 4px 0 0 4px; background: #7d7d7d; color: #111; font: 700 15px/18px "Noto Sans", "Open Sans", sans-serif; }
.discuss span { writing-mode: vertical-rl; rotate: 180deg; }
```
